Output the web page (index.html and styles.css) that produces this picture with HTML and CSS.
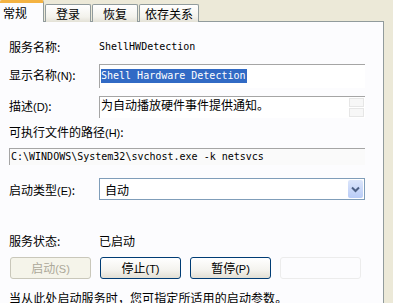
FILE: index.html
```html
<!DOCTYPE html>
<html lang="zh-CN">
<head>
<meta charset="utf-8">
<title>ShellHWDetection 属性</title>
<link rel="stylesheet" href="styles.css">
</head>
<body>
<div class="tabs">
  <div class="tab active">常规</div>
  <div class="tab">登录</div>
  <div class="tab">恢复</div>
  <div class="tab wide">依存关系</div>
</div>
<div class="panel">
  <div class="row r1">
    <span class="label">服务名称:</span>
    <span class="mono">ShellHWDetection</span>
  </div>
  <div class="row r2">
    <span class="label">显示名称<span class="acc">(N)</span>:</span>
    <div class="field name"><span class="sel mono">Shell Hardware Detection</span></div>
  </div>
  <div class="row r3">
    <span class="label">描述<span class="acc">(D)</span>:</span>
    <div class="field desc">
      <span class="desc-text">为自动播放硬件事件提供通知。</span>
      <div class="spin"><span class="sb"></span><span class="sb"></span></div>
    </div>
  </div>
  <div class="row r4"><span class="label">可执行文件的路径<span class="acc">(H)</span>:</span></div>
  <div class="field path mono">C:\WINDOWS\System32\svchost.exe -k netsvcs</div>
  <div class="row r6">
    <span class="label">启动类型<span class="acc">(E)</span>:</span>
    <div class="combo">
      <span class="combo-text">自动</span>
      <span class="arrow"><svg width="9" height="7" viewBox="0 0 9 7"><path d="M1 1.5 L4.5 5 L8 1.5" fill="none" stroke="#4D6185" stroke-width="2"/></svg></span>
    </div>
  </div>
  <div class="sep"></div>
  <div class="row r8">
    <span class="label">服务状态:</span>
    <span>已启动</span>
  </div>
  <div class="buttons">
    <button class="btn disabled">启动<span class="acc">(S)</span></button>
    <button class="btn">停止<span class="acc">(T)</span></button>
    <button class="btn">暂停<span class="acc">(P)</span></button>
    <button class="btn ghost"></button>
  </div>
  <div class="hint">当从此处启动服务时，您可指定所适用的启动参数。</div>
</div>
</body>
</html>
```
FILE: styles.css
```css
html, body {
  margin: 0;
  padding: 0;
}
body {
  width: 393px;
  height: 303px;
  overflow: hidden;
  background: #ECE9D8;
  font-family: "Noto Sans CJK SC", "Liberation Sans", sans-serif;
  font-size: 12px;
  color: #000;
}
.mono {
  font-family: "DejaVu Sans Mono", "Liberation Mono", monospace;
  font-size: 10px;
}
.acc {
  font-family: "Liberation Sans", sans-serif;
  font-size: 11px;
}
.tabs {
  display: flex;
  align-items: flex-end;
  height: 22px;
  padding-left: 0;
  gap: 1px;
}
.tab {
  box-sizing: border-box;
  width: 46px;
  height: 18px;
  border: 1px solid #919B9C;
  border-bottom: none;
  border-radius: 2px 2px 0 0;
  background: linear-gradient(#FFFFFF, #F3F2EC 70%, #E3E1D6);
  display: flex;
  align-items: center;
  justify-content: center;
  line-height: 14px;
  font-size: 12px;
}
.tab.active {
  width: 44px;
  height: 22px;
  background: #FCFCFE;
  border-top: 3px solid #F4B342;
  border-left: none;
  justify-content: flex-start;
  padding-left: 3px;
  position: relative;
  z-index: 1;
}
.tab.wide {
  width: 60px;
}
.panel {
  box-sizing: border-box;
  width: 384px;
  height: 282px;
  background: #FCFCFE;
  border-right: 1px solid #919B9C;
  border-top: 1px solid #919B9C;
  margin-top: -1px;
  padding-left: 9px;
  display: flex;
  flex-direction: column;
}
.row {
  display: flex;
  align-items: center;
}
.label {
  width: 90px;
  flex: none;
  white-space: nowrap;
}
.r1 { margin-top: 16px; height: 16px; }
.r2 { margin-top: 10px; height: 24px; align-items: flex-start; }
.r2 .label { padding-top: 2px; }
.field {
  box-sizing: border-box;
  border-top: 1px solid #A5A5A5;
  border-left: 1px solid #A5A5A5;
  background: #FFFFFF;
}
.name {
  width: 266px;
  height: 24px;
  padding-left: 1px;
}
.sel {
  display: inline-block;
  background: #316AC5;
  color: #FFFFFF;
  height: 14px;
  line-height: 14px;
  padding-right: 1px;
}
.r3 { margin-top: 8px; height: 22px; align-items: flex-start; }
.r3 .label { padding-top: 1px; }
.desc {
  width: 266px;
  height: 22px;
  display: flex;
  justify-content: space-between;
  padding-left: 1px;
}
.desc-text { line-height: 16px; }
.spin {
  display: flex;
  flex-direction: column;
  gap: 1px;
  padding: 1px 1px 0 0;
}
.sb {
  display: block;
  width: 15px;
  height: 9px;
  box-sizing: border-box;
  border: 1px solid #E6E6E6;
  background: #F7F7F7;
}
.r4 { margin-top: 5px; height: 16px; }
.path {
  margin-top: 9px;
  width: 356px;
  height: 19px;
  line-height: 16px;
  padding-left: 1px;
  background: #FAFAFA;
}
.r6 { margin-top: 13px; height: 22px; }
.combo {
  box-sizing: border-box;
  width: 266px;
  height: 22px;
  border: 1px solid #7F9DB9;
  background: #FFFFFF;
  display: flex;
  align-items: center;
  justify-content: space-between;
  padding: 1px;
}
.combo-text { padding-left: 4px; }
.arrow {
  width: 15px;
  height: 18px;
  border-radius: 2px;
  background: linear-gradient(#DCE6FB, #B9CCF7);
  display: flex;
  align-items: center;
  justify-content: center;
}
.sep {
  margin-top: 22px;
  width: 354px;
  height: 1px;
  background: #B6B4A7;
}
.r8 { margin-top: 10px; height: 16px; }
.buttons {
  margin-top: 9px;
  display: flex;
  gap: 9px;
  padding-left: 1px;
}
.btn {
  box-sizing: border-box;
  width: 81px;
  height: 22px;
  border: 1px solid #003C74;
  border-radius: 3px;
  background: linear-gradient(#FFFFFF, #F4F3EE 60%, #E2DFD4);
  font-family: "Noto Sans CJK SC", "Liberation Sans", sans-serif;
  font-size: 12px;
  color: #000;
  padding: 0;
  line-height: 18px;
}
.btn.disabled {
  border-color: #C9C7BA;
  background: #F5F4EA;
  color: #ACA899;
}
.btn.ghost {
  border-color: #ECECEC;
  background: #FCFCFE;
}
.hint {
  margin-top: 11px;
  white-space: nowrap;
  line-height: 16px;
  letter-spacing: 0.1px;
}
```
